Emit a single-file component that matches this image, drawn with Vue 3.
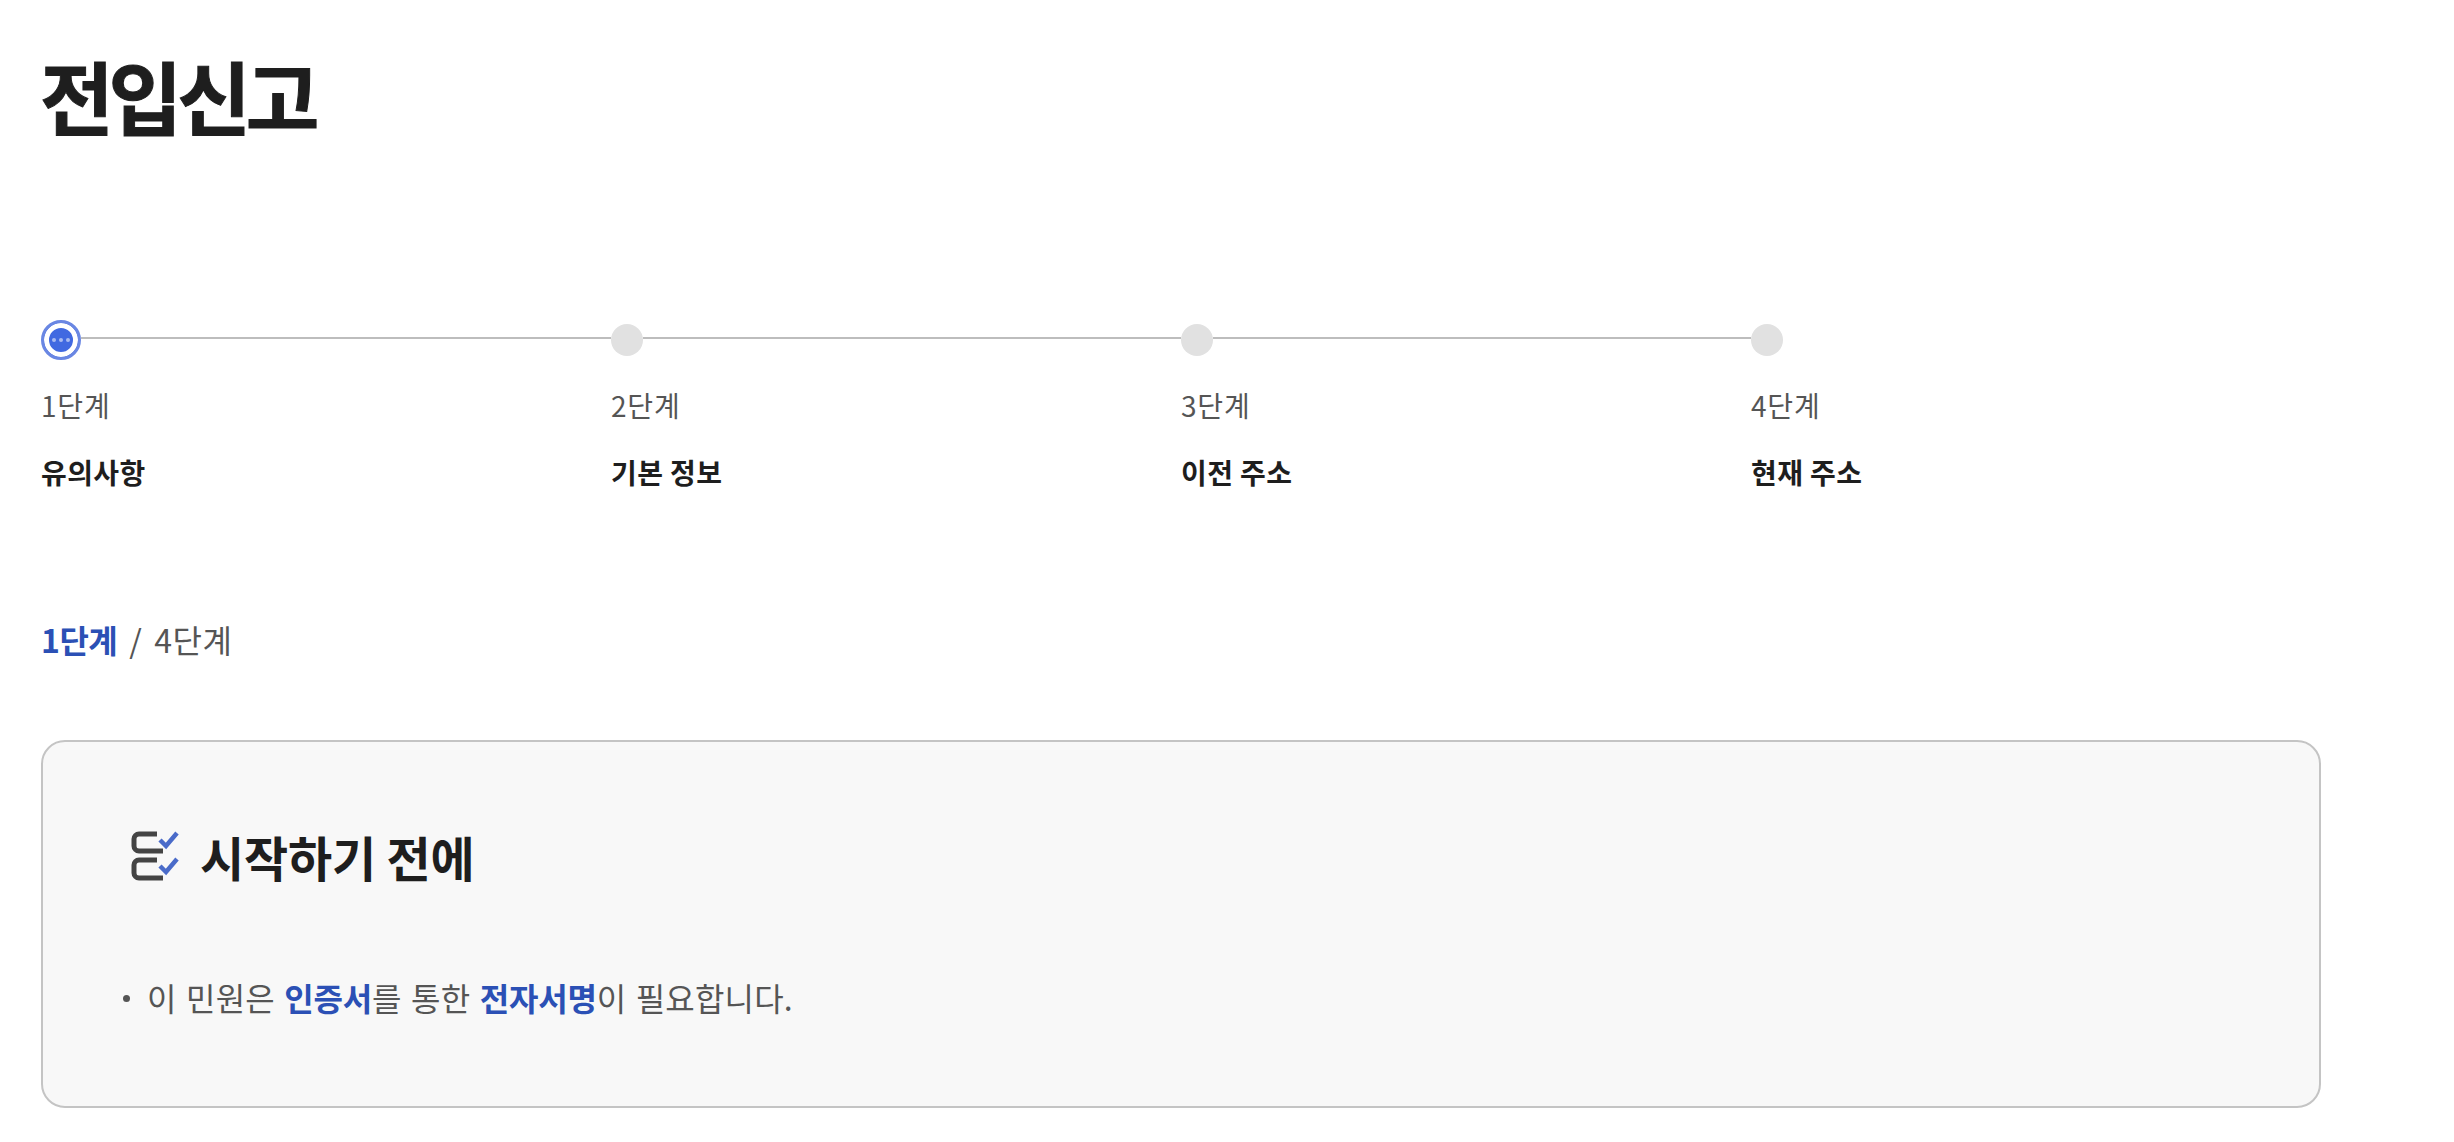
<template>
  <div class="page">
    <h1 class="title">전입신고</h1>

    <ol class="steps">
      <li v-for="(step, i) in steps" :key="step" class="step">
        <div class="track">
          <span v-if="i === 0" class="dot current"><i></i><i></i><i></i></span>
          <span v-else class="dot"></span>
          <span v-if="i < steps.length - 1" class="line"></span>
        </div>
        <div class="step-no">{{ i + 1 }}단계</div>
        <div class="step-name">{{ step }}</div>
      </li>
    </ol>

    <div class="progress"><b>1단계</b><span class="slash">/</span>4단계</div>

    <div class="notice">
      <h2 class="notice-title">
        <svg class="check-icon" width="48" height="50" viewBox="0 0 48 50" fill="none">
          <path d="M26 3H8a5 5 0 0 0-5 5v7a5 5 0 0 0 5 5h24" stroke="#444" stroke-width="5" />
          <path d="M26 29H8a5 5 0 0 0-5 5v8a5 5 0 0 0 5 5h24" stroke="#444" stroke-width="5" />
          <path d="M29 9l6 6 11-13" stroke="#4a6bc9" stroke-width="4.5" />
          <path d="M29 35l6 6 11-13" stroke="#4a6bc9" stroke-width="4.5" />
        </svg>
        시작하기 전에
      </h2>
      <ul class="notice-list">
        <li>이 민원은 <b>인증서</b>를 통한 <b>전자서명</b>이 필요합니다.</li>
      </ul>
    </div>
  </div>
</template>

<script setup>
const steps = ['유의사항', '기본 정보', '이전 주소', '현재 주소']
</script>

<style>
html, body {
  background: #fff;
}
</style>

<style scoped>
.page {
  padding: 0 133px 0 41px;
  font-family: "Noto Sans CJK KR", "Noto Sans", sans-serif;
  color: #1e1e1e;
}
.title {
  margin: 0 0 0 -1px;
  padding-top: 44px;
  font-size: 80px;
  line-height: 100px;
  font-weight: 700;
  letter-spacing: -5px;
  -webkit-text-stroke: 1px #1e1e1e;
}
.steps {
  display: grid;
  grid-template-columns: repeat(4, 570px);
  list-style: none;
  margin: 176px 0 0;
  padding: 0;
}
.track {
  display: flex;
  align-items: center;
  height: 40px;
}
.dot {
  flex: none;
  box-sizing: border-box;
  width: 32px;
  height: 32px;
  border-radius: 50%;
  background: #e1e1e1;
}
.dot.current {
  display: flex;
  align-items: center;
  justify-content: center;
  gap: 3px;
  width: 40px;
  height: 40px;
  background: #4169e1;
  border: 3px solid #6a87e3;
  box-shadow: inset 0 0 0 5px #fff;
}
.dot.current i {
  width: 4px;
  height: 4px;
  border-radius: 50%;
  background: #a9bbf0;
}
.line {
  flex: 1;
  height: 2px;
  margin-bottom: 4px;
  background: #bdbdbd;
}
.step-no {
  margin-top: 24px;
  font-size: 28px;
  line-height: 42px;
  color: #555;
  letter-spacing: 0.8px;
}
.step-name {
  margin-top: 25px;
  font-size: 28px;
  line-height: 42px;
  font-weight: 700;
  letter-spacing: 0.4px;
}
.progress {
  margin-top: 122px;
  font-size: 32px;
  line-height: 48px;
  color: #555;
  letter-spacing: 0.5px;
}
.progress b {
  color: #2b50b5;
  letter-spacing: -0.5px;
}
.slash {
  margin: 0 12px;
}
.notice {
  box-sizing: border-box;
  height: 368px;
  margin-top: 77px;
  padding: 78px 88px 0;
  background: #f8f8f8;
  border: 2px solid #c4c4c4;
  border-radius: 24px;
}
.notice-title {
  display: flex;
  align-items: center;
  gap: 21px;
  margin: 0;
  font-size: 48px;
  line-height: 72px;
  font-weight: 700;
  letter-spacing: -0.2px;
}
.notice-list {
  list-style: none;
  margin: 81px 0 0;
  padding: 0;
  font-size: 32px;
  line-height: 48px;
  color: #555;
  letter-spacing: 0.2px;
  word-spacing: 2px;
}
.notice-list li {
  position: relative;
  padding-left: 16px;
}
.notice-list li::before {
  content: "";
  position: absolute;
  left: -8px;
  top: 22px;
  width: 7px;
  height: 7px;
  border-radius: 50%;
  background: #555;
}
.notice-list b {
  color: #2b50b5;
  letter-spacing: -0.2px;
}
</style>
